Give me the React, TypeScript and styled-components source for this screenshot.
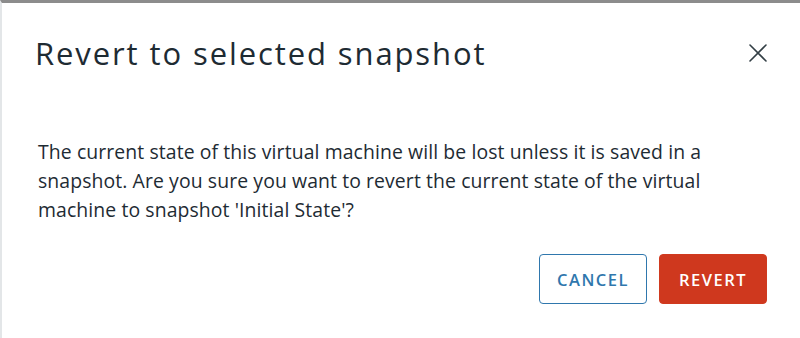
import styled, { createGlobalStyle } from "styled-components";
import { FC } from "react";

const GlobalStyle = createGlobalStyle`
    html, body {
        margin: 0;
        padding: 0;
        background: #ffffff;
    }
    body {
        font-family: "Open Sans", "Liberation Sans", sans-serif;
        color: #1e2b33;
    }
`

const CloseIcon: FC = () => (<svg width="20" height="20" viewBox="0 0 20 20" aria-hidden="true">
    <path d="M2 2 L18 18 M18 2 L2 18" stroke="#333f45" strokeWidth="1.6" fill="none" strokeLinecap="round"/>
</svg>)

const App: FC = () => (<>
    <GlobalStyle/>
    <Modal role="dialog">
        <Header>
            <Title>Revert to selected snapshot</Title>
            <CloseButton aria-label="Close">
                <CloseIcon/>
            </CloseButton>
        </Header>
        <Body>
            The current state of this virtual machine will be lost unless it is saved in a
            snapshot. Are you sure you want to revert the current state of the virtual
            machine to snapshot 'Initial State'?
        </Body>
        <Footer>
            <Button variant="outline">Cancel</Button>
            <Button variant="danger">Revert</Button>
        </Footer>
    </Modal>
</>)

export default App

const Modal = styled.div`
    box-sizing: border-box;
    width: 800px;
    height: 338px;
    background: #ffffff;
    border-top: 3px solid #8c8c8c;
    border-left: 2px solid #e3e6e8;
    display: flex;
    flex-direction: column;
`

const Header = styled.div`
    display: flex;
    align-items: center;
    justify-content: space-between;
    padding: 30px 30px 0 33px;
`

const Title = styled.h3`
    margin: 0;
    font-size: 31px;
    font-weight: 500;
    letter-spacing: 1.9px;
    line-height: 40px;
    color: #1e2b33;
`

const CloseButton = styled.button`
    display: flex;
    align-items: center;
    justify-content: center;
    border: none;
    background: none;
    padding: 0;
    width: 24px;
    height: 24px;
    cursor: pointer;
`

const Body = styled.p`
    margin: 0;
    padding: 64px 40px 0 36px;
    font-size: 19.4px;
    letter-spacing: 0.1px;
    line-height: 29px;
    color: #1e2b33;
`

const Footer = styled.div`
    display: flex;
    justify-content: flex-end;
    gap: 12px;
    padding: 30px 33px 0 0;
`

const Button = styled.button<{ variant: "outline" | "danger" }>`
    box-sizing: border-box;
    height: 50px;
    padding: 0 16px;
    border-radius: 4px;
    font-family: "Open Sans", "Liberation Sans", sans-serif;
    font-size: 16.5px;
    font-weight: 600;
    letter-spacing: 1.5px;
    text-transform: uppercase;
    cursor: pointer;
    border: 1.5px solid ${p => p.variant === "danger" ? "#d03a1f" : "#2f77ad"};
    background: ${p => p.variant === "danger" ? "#cf381e" : "#ffffff"};
    color: ${p => p.variant === "danger" ? "#ffffff" : "#2f77ad"};
    min-width: 108px;
`
